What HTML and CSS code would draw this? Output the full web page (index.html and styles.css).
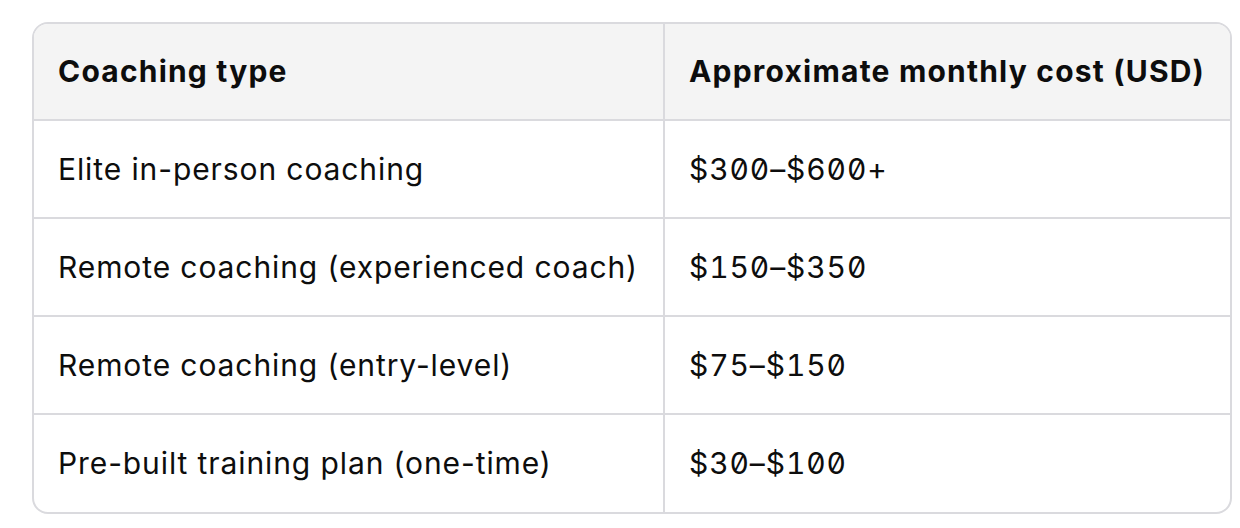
FILE: index.html
```html
<!DOCTYPE html>
<html lang="en">
<head>
<meta charset="utf-8">
<title>Coaching costs</title>
<link rel="stylesheet" href="styles.css">
</head>
<body>
<div class="table-wrap">
  <table class="cost-table">
    <thead>
      <tr>
        <th class="col-type">Coaching type</th>
        <th class="col-cost">Approximate monthly cost (USD)</th>
      </tr>
    </thead>
    <tbody>
      <tr>
        <td class="col-type">Elite in-person coaching</td>
        <td class="col-cost"><span class="num">$300–$600+</span></td>
      </tr>
      <tr>
        <td class="col-type">Remote coaching (experienced coach)</td>
        <td class="col-cost"><span class="num">$150–$350</span></td>
      </tr>
      <tr>
        <td class="col-type">Remote coaching (entry-level)</td>
        <td class="col-cost"><span class="num">$75–$150</span></td>
      </tr>
      <tr>
        <td class="col-type">Pre-built training plan (one-time)</td>
        <td class="col-cost"><span class="num">$30–$100</span></td>
      </tr>
    </tbody>
  </table>
</div>
</body>
</html>
```

FILE: styles.css
```css
* { box-sizing: border-box; }
html, body { margin: 0; padding: 0; background: #ffffff; }
body {
  padding: 22px 9px 0 32px;
  font-family: Inter, "Noto Sans", sans-serif;
  color: #0d0d0d;
}
.table-wrap {
  width: 1200px;
  border: 2px solid #dadade;
  border-radius: 16px;
  overflow: hidden;
}
.cost-table {
  width: 100%;
  border-collapse: separate;
  border-spacing: 0;
  font-size: 30px;
  line-height: 1.5;
  letter-spacing: 0.9px;
}
.cost-table th,
.cost-table td {
  text-align: left;
  padding: 0 24px;
  height: 98px;
  border-bottom: 2px solid #dadade;
  vertical-align: middle;
}
.cost-table th {
  background: #f4f4f4;
  font-weight: 700;
  height: 97px;
  letter-spacing: 1.2px;
}
.cost-table tbody tr:last-child td { border-bottom: none; height: 97px; }
.cost-table .col-type {
  width: 631px;
  border-right: 2px solid #dadade;
}
.cost-table td { font-weight: 400; }
.num {
  font-feature-settings: "tnum" 1, "zero" 1;
  letter-spacing: 0.9px;
}
```
